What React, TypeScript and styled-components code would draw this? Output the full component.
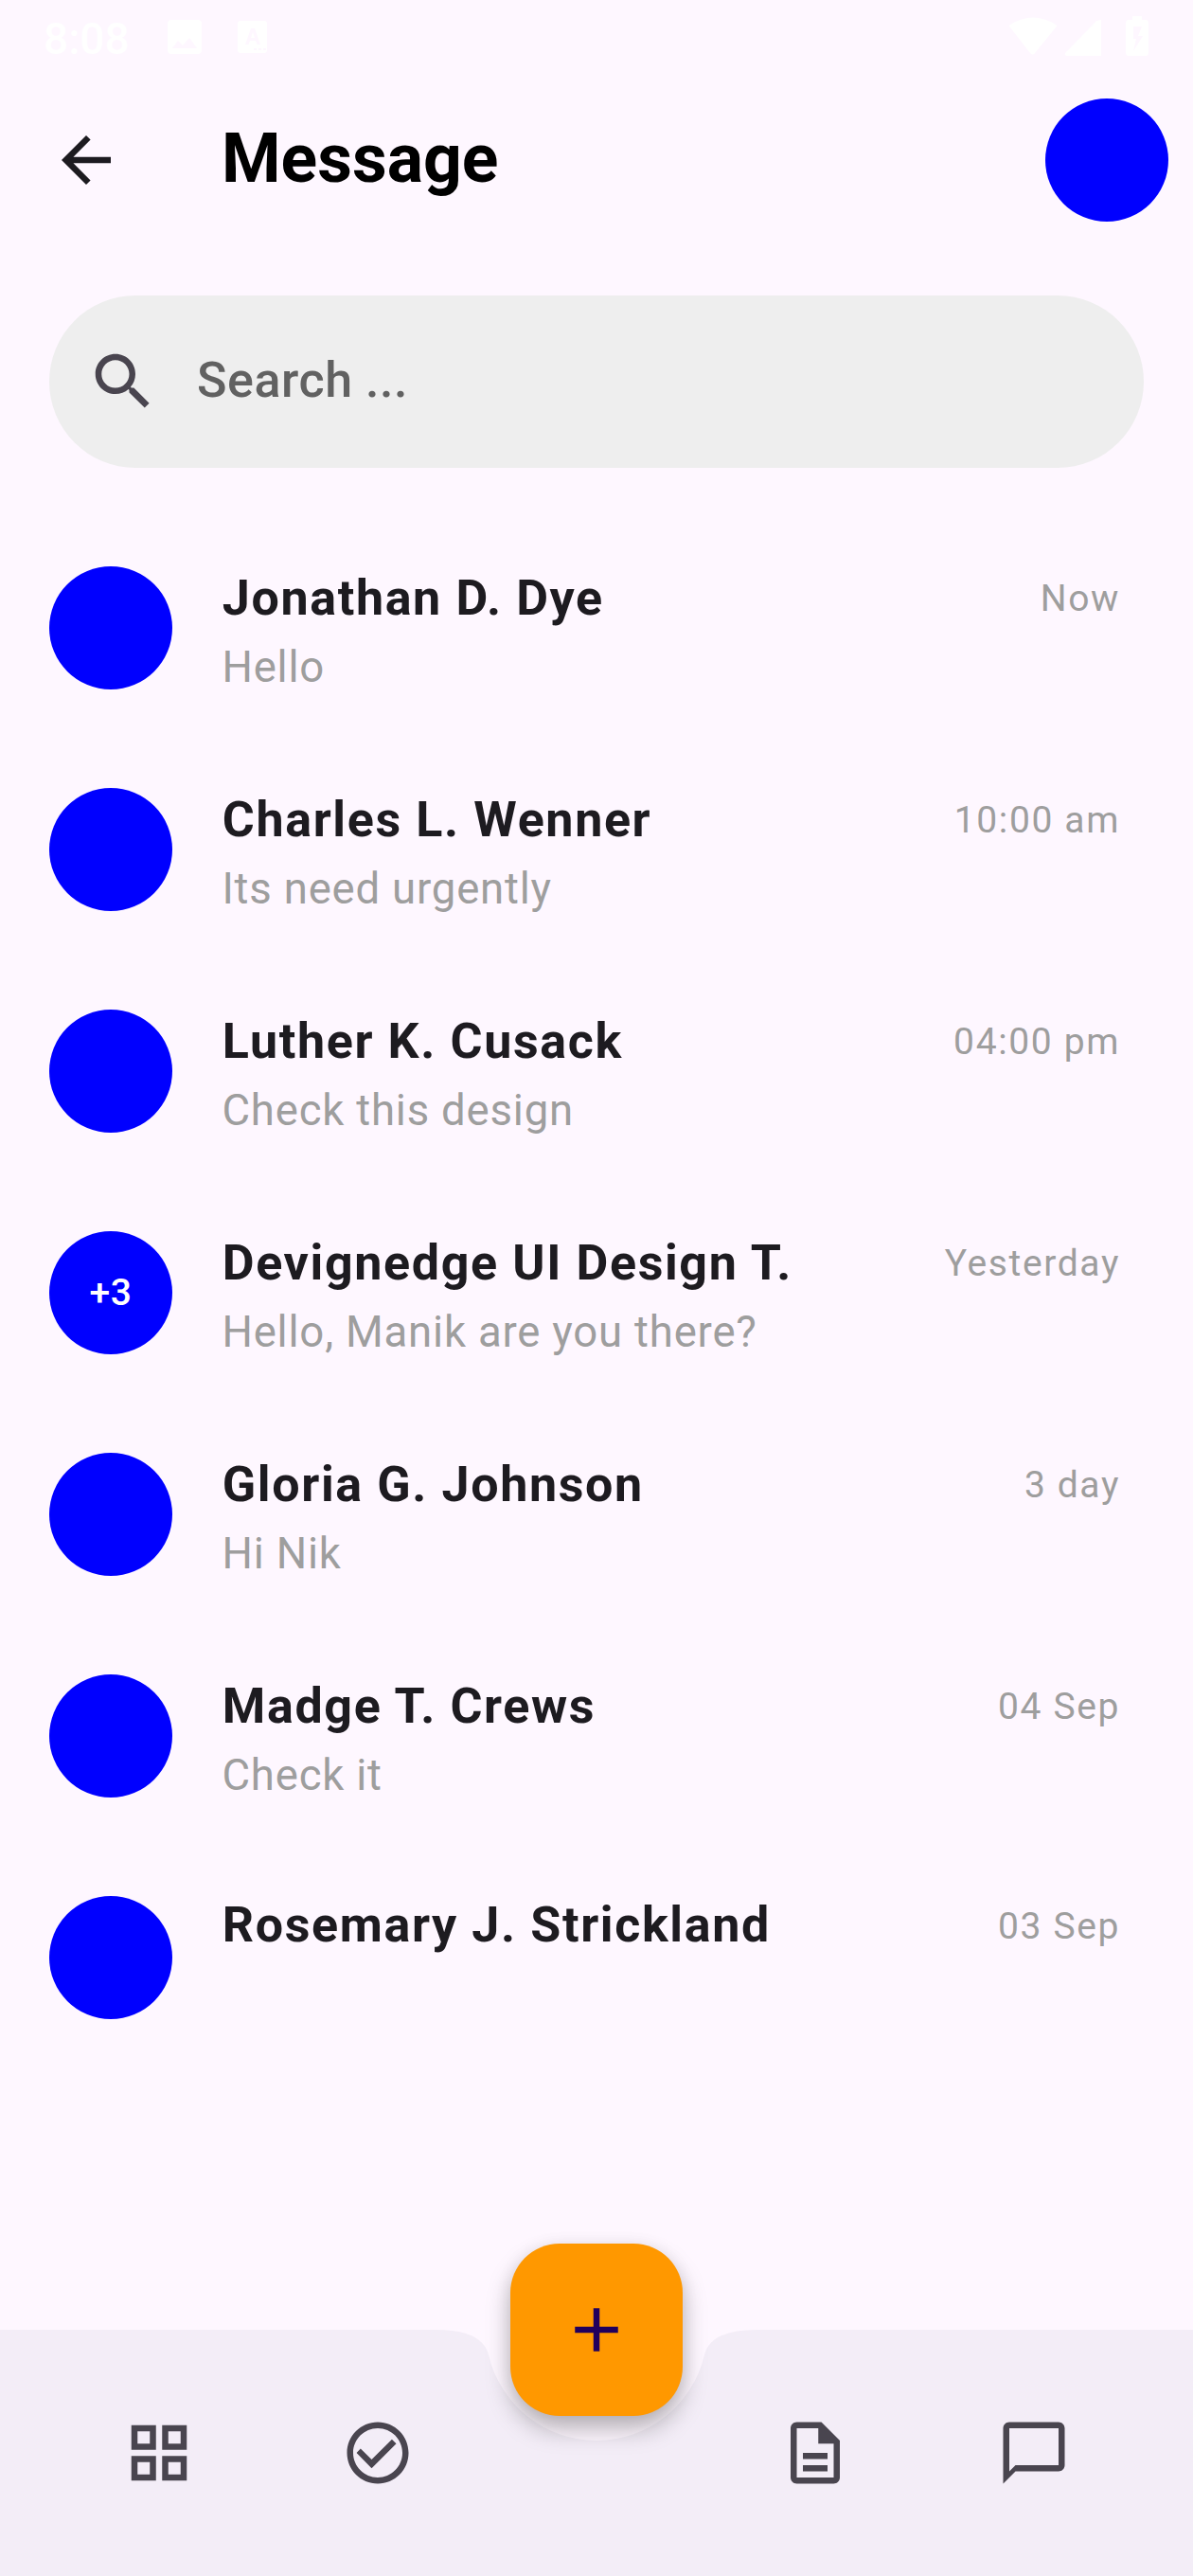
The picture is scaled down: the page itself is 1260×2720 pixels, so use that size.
import React from "react";
import styled, { createGlobalStyle } from "styled-components";

const GlobalStyle = createGlobalStyle`
  * { box-sizing: border-box; }
  body { margin: 0; background: #fef7ff; font-family: Roboto, sans-serif; }
  button { border: 0; padding: 0; background: none; font: inherit; color: inherit; }
`;

const Screen = styled.div`
  position: relative;
  width: 1260px;
  height: 2720px;
  display: flex;
  flex-direction: column;
  background: #fef7ff;
  color: #1d1b20;
  overflow: hidden;
`;

const StatusBar = styled.div`
  height: 78px;
  flex: none;
  display: flex;
  align-items: center;
  justify-content: space-between;
  padding: 0 45px 0 46px;
  color: #fff;
`;

const Clock = styled.span`
  width: 131px;
  font-size: 46px;
  font-weight: 500;
  line-height: 78px;
  padding-top: 4px;
`;

const StatusGroup = styled.div`
  display: flex;
  align-items: center;
`;

const StatusSvg = styled.svg`
  display: block;
  fill: currentColor;
`;

const Header = styled.header`
  height: 182px;
  flex: none;
  display: flex;
  align-items: center;
  padding: 0 26px 0 52px;
`;

const Title = styled.h1`
  flex: 1;
  margin: 0 0 0 104px;
  padding-bottom: 3px;
  font-size: 71.5px;
  line-height: 90px;
  font-weight: 700;
  color: #000;
`;

const Icon = styled.svg`
  display: block;
  width: 78px;
  height: 78px;
  fill: currentColor;
`;

const Avatar = styled.div`
  width: 130px;
  height: 130px;
  flex: none;
  display: flex;
  align-items: center;
  justify-content: center;
  border-radius: 50%;
  background: #0000ff;
  color: #fff;
  font-size: 39px;
  font-weight: 500;
  letter-spacing: 0.49px;
`;

const SearchBar = styled.div`
  height: 182px;
  flex: none;
  display: flex;
  align-items: center;
  gap: 39px;
  margin: 52px 52px 0;
  padding-left: 39px;
  border-radius: 91px;
  background: #eeeeee;
  color: #49454f;
`;

const Placeholder = styled.span`
  padding-bottom: 3px;
  font-size: 52px;
  line-height: 78px;
  font-weight: 500;
  letter-spacing: 0.55px;
  color: #616161;
`;

const List = styled.ul`
  flex: 1;
  margin: 0;
  padding: 52px 0 0;
  list-style: none;
`;

const Row = styled.li`
  height: 234px;
  display: flex;
  align-items: flex-start;
  padding: 52px 77px 0 52px;
`;

const Body = styled.div<{ $single?: boolean }>`
  flex: 1;
  display: flex;
  flex-direction: column;
  margin: ${(p) => (p.$single ? -6 : -3)}px 0 0 52.8px;
`;

const Name = styled.span`
  font-size: 52px;
  line-height: 73px;
  font-weight: 700;
  letter-spacing: 1.625px;
`;

const Preview = styled.span`
  margin: 4px 0 0 -0.4px;
  font-size: 45.5px;
  line-height: 65px;
  letter-spacing: 0.8125px;
  color: #9e9e9e;
`;

const Time = styled.span<{ $single?: boolean }>`
  font-size: 39px;
  line-height: 52px;
  letter-spacing: 1.625px;
  margin-top: ${(p) => (p.$single ? 6 : 8)}px;
  color: #9e9e9e;
`;

const Nav = styled.nav`
  height: 260px;
  flex: none;
  display: flex;
  align-items: center;
  padding: 0 52px;
  background: #f3edf7;
  color: #49454f;
  clip-path: path("M0 0H461Q509.75 0 516.16 27A117 117 0 0 0 743.84 27Q750.25 0 799 0H1260V260H0Z");
`;

const NavItem = styled.button`
  flex: 1;
  display: flex;
  justify-content: center;
`;

const Fab = styled.button`
  position: absolute;
  left: 539px;
  bottom: 169px;
  width: 182px;
  height: 182px;
  display: flex;
  align-items: center;
  justify-content: center;
  border-radius: 52px;
  background: #ff9800;
  color: #21005d;
  box-shadow: 0 14px 26px rgba(0, 0, 0, 0.27), 0 2px 18px rgba(0, 0, 0, 0.07);
`;

const ICONS = {
  back: "M20 11H7.83l5.59-5.59L12 4l-8 8 8 8 1.41-1.41L7.83 13H20v-2z",
  search:
    "M15.5 14h-.79l-.28-.27C15.41 12.59 16 11.11 16 9.5 16 5.91 13.09 3 9.5 3S3 5.91 3 9.5 5.91 16 9.5 16c1.61 0 3.09-.59 4.23-1.57l.27.28v.79l5 4.99L20.49 19l-4.99-5zm-6 0C7.01 14 5 11.99 5 9.5S7.01 5 9.5 5 14 7.01 14 9.5 11.99 14 9.5 14z",
  add: "M19 13h-6v6h-2v-6H5v-2h6V5h2v6h6v2z",
  grid: "M3 3v8h8V3H3zm6 6H5V5h4v4zm-6 4v8h8v-8H3zm6 6H5v-4h4v4zm4-16v8h8V3h-8zm6 6h-4V5h4v4zm-6 4v8h8v-8h-8zm6 6h-4v-4h4v4z",
  task: "M12 2C6.48 2 2 6.48 2 12s4.48 10 10 10 10-4.48 10-10S17.52 2 12 2zm0 18c-4.41 0-8-3.59-8-8s3.59-8 8-8 8 3.59 8 8-3.59 8-8 8zM16.59 7.58L10 14.17l-3.59-3.58L5.1 12l4.9 5 8-8-1.41-1.42z",
  doc: "M8 16h8v2H8zm0-4h8v2H8zm6-10H6c-1.1 0-2 .9-2 2v16c0 1.1.89 2 1.99 2H18c1.1 0 2-.9 2-2V8l-6-6zm4 18H6V4h7v5h5v11z",
  chat: "M20 2H4c-1.1 0-2 .9-2 2v18l4-4h14c1.1 0 2-.9 2-2V4c0-1.1-.9-2-2-2zm0 14H6l-2 2V4h16v12z",
};

const Glyph = ({ name }: { name: keyof typeof ICONS }) => (
  <Icon viewBox="0 0 24 24">
    <path fillRule="evenodd" d={ICONS[name]} />
  </Icon>
);

const MESSAGES = [
  { name: "Jonathan D. Dye", preview: "Hello", time: "Now" },
  { name: "Charles L. Wenner", preview: "Its need urgently", time: "10:00 am" },
  { name: "Luther K. Cusack", preview: "Check this design", time: "04:00 pm" },
  { name: "Devignedge UI Design T.", preview: "Hello, Manik are you there?", time: "Yesterday", badge: "+3" },
  { name: "Gloria G. Johnson", preview: "Hi Nik", time: "3 day" },
  { name: "Madge T. Crews", preview: "Check it", time: "04 Sep" },
  { name: "Rosemary J. Strickland", preview: "", time: "03 Sep" },
];

export default function App() {
  return (
    <Screen>
      <GlobalStyle />
      <StatusBar>
        <StatusGroup>
          <Clock>8:08</Clock>
          <StatusSvg width="112" height="40" viewBox="0 0 112 40">
            <path fillRule="evenodd" d="M4 2H32Q36 2 36 6V34Q36 38 32 38H4Q0 38 0 34V6Q0 2 4 2ZM5 32H31L23 21L16 29L11 24Z" />
            <path
              fillRule="evenodd"
              d="M77 3H102Q105 3 105 6V34Q105 37 102 37H77Q74 37 74 34V6Q74 3 77 3ZM88 11L82 28H85.5L87 24H93L94.5 28H98L92 11ZM88 21L90 15L92 21ZM91 32H94V34H91ZM96 32H99V34H96ZM101 32H104V34H101Z"
            />
          </StatusSvg>
        </StatusGroup>
        <StatusSvg width="149" height="44" viewBox="0 0 149 44">
          <path d="M1 12Q-1 10 1 9Q25 -6 49 9Q51 10 49 12L27 39Q25 42 22 39Z" />
          <path d="M97 4V42H61Q57 41 60 38L92 5Z" />
          <path
            fillRule="evenodd"
            d="M130 0H140V4H144Q147 4 147 8V38Q147 42 144 42H126Q123 42 123 38V8Q123 4 126 4H130ZM131 11V24H134L131 37L141 21H136L140 11Z"
          />
        </StatusSvg>
      </StatusBar>
      <Header>
        <Glyph name="back" />
        <Title>Message</Title>
        <Avatar />
      </Header>
      <SearchBar>
        <Glyph name="search" />
        <Placeholder>Search ...</Placeholder>
      </SearchBar>
      <List>
        {MESSAGES.map((m) => (
          <Row key={m.name}>
            <Avatar>{m.badge}</Avatar>
            <Body $single={!m.preview}>
              <Name>{m.name}</Name>
              {m.preview && <Preview>{m.preview}</Preview>}
            </Body>
            <Time $single={!m.preview}>{m.time}</Time>
          </Row>
        ))}
      </List>
      <Nav>
        <NavItem><Glyph name="grid" /></NavItem>
        <NavItem><Glyph name="task" /></NavItem>
        <NavItem as="span" />
        <NavItem><Glyph name="doc" /></NavItem>
        <NavItem><Glyph name="chat" /></NavItem>
      </Nav>
      <Fab><Glyph name="add" /></Fab>
    </Screen>
  );
}
